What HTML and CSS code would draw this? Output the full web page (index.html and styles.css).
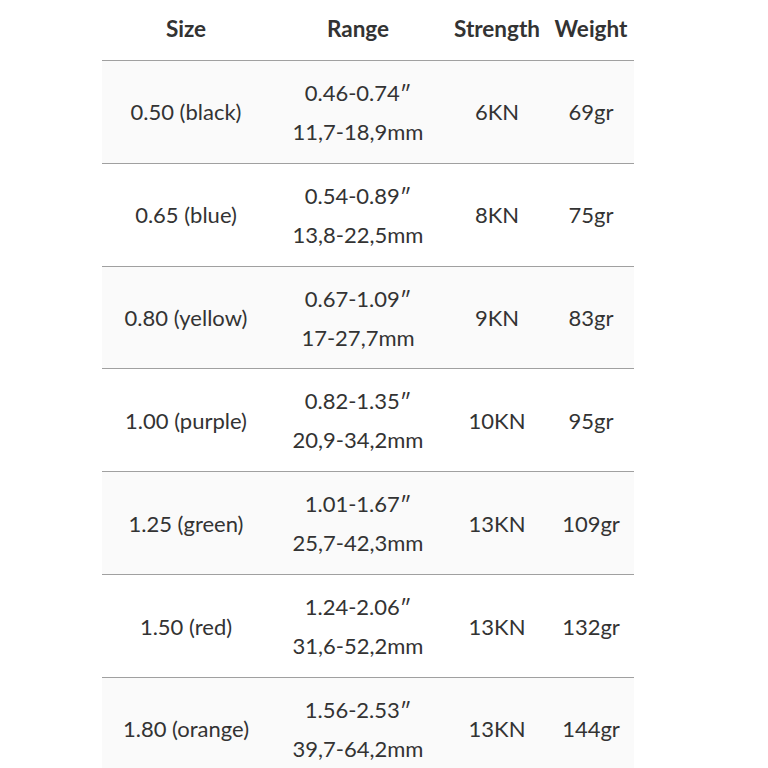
FILE: index.html
```html
<!DOCTYPE html>
<html>
<head>
<meta charset="utf-8">
<link rel="stylesheet" href="styles.css">
</head>
<body>
<div class="wrap">
<table class="spec">
<colgroup>
<col class="c-size"><col class="c-range"><col class="c-str"><col class="c-wt">
</colgroup>
<thead>
<tr><th>Size</th><th>Range</th><th>Strength</th><th>Weight</th></tr>
</thead>
<tbody>
<tr><td>0.50 (black)</td><td>0.46-0.74″<br>11,7-18,9mm</td><td>6KN</td><td>69gr</td></tr>
<tr><td>0.65 (blue)</td><td>0.54-0.89″<br>13,8-22,5mm</td><td>8KN</td><td>75gr</td></tr>
<tr><td>0.80 (yellow)</td><td>0.67-1.09″<br>17-27,7mm</td><td>9KN</td><td>83gr</td></tr>
<tr><td>1.00 (purple)</td><td>0.82-1.35″<br>20,9-34,2mm</td><td>10KN</td><td>95gr</td></tr>
<tr><td>1.25 (green)</td><td>1.01-1.67″<br>25,7-42,3mm</td><td>13KN</td><td>109gr</td></tr>
<tr><td>1.50 (red)</td><td>1.24-2.06″<br>31,6-52,2mm</td><td>13KN</td><td>132gr</td></tr>
<tr><td>1.80 (orange)</td><td>1.56-2.53″<br>39,7-64,2mm</td><td>13KN</td><td>144gr</td></tr>
</tbody>
</table>
</div>
</body>
</html>
```
FILE: styles.css
```css
html, body {
  margin: 0;
  padding: 0;
  background: #ffffff;
}
.wrap {
  padding-left: 102px;
}
.spec {
  width: 532px;
  border-collapse: collapse;
  table-layout: fixed;
  font-family: "Lato", "Liberation Sans", sans-serif;
  font-size: 22px;
  color: #333333;
}
.c-size { width: 168px; }
.c-range { width: 176px; }
.c-str { width: 102px; }
.c-wt { width: 86px; }
.spec th {
  height: 56px;
  padding: 0 2px 4px;
  font-size: 22.5px;
  font-weight: 700;
  text-align: center;
  vertical-align: middle;
  border-bottom: 1px solid #a0a0a0;
  color: #333333;
}
.spec td {
  padding: 13px 2px 11px;
  line-height: 38.9px;
  text-align: center;
  vertical-align: middle;
  border-bottom: 1px solid #a0a0a0;
}
.spec tbody tr:nth-child(odd) td {
  background: #fafafa;
}
```
